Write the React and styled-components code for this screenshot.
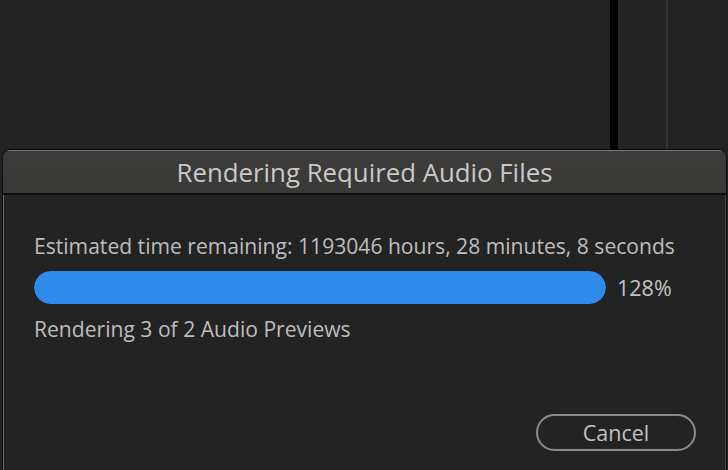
import React from "react";
import styled, { createGlobalStyle } from "styled-components";

const GlobalStyle = createGlobalStyle`
  html, body {
    margin: 0;
    padding: 0;
    background: #232323;
  }
  body {
    font-family: "Open Sans", "Noto Sans", sans-serif;
  }
`;

const Screen = styled.div`
  position: relative;
  width: 728px;
  height: 470px;
  overflow: hidden;
  background: #232323;
  display: flex;
  flex-direction: column;
`;

const Backdrop = styled.div`
  height: 149px;
  flex-shrink: 0;
  display: flex;
`;

const BackdropFill = styled.div`
  width: 610px;
  background: #232323;
`;

const Divider = styled.div`
  width: ${props => props.width}px;
  background: ${props => props.color};
`;

const Dialog = styled.div`
  margin: 0 1px 0 2px;
  flex: 1;
  display: flex;
  flex-direction: column;
  border: 1px solid #0c0c0c;
  border-bottom: none;
  border-radius: 9px 9px 0 0;
  box-shadow: inset 1px 1px 0 #6c6c6c, inset -1px 0 0 #4a4a4a;
  background: #232323;
  overflow: hidden;
`;

const TitleBar = styled.div`
  height: 42px;
  flex-shrink: 0;
  display: flex;
  align-items: center;
  justify-content: center;
  background: linear-gradient(#3d3c3b, #393938);
  border-top: 1px solid #777;
  border-bottom: 2px solid #0e0e0e;
  color: #c9c9c9;
  font-size: 25.8px;
`;

const Body = styled.div`
  flex: 1;
  display: flex;
  flex-direction: column;
  padding: 38px 0 0 31px;
  color: #bdbdbd;
  font-size: 21.1px;
`;

const Line = styled.div`
  line-height: 26px;
  white-space: nowrap;
`;

const ProgressRow = styled.div`
  display: flex;
  align-items: center;
  gap: 11px;
  margin: 12px 0 12px;
`;

const Track = styled.div`
  width: 572px;
  height: 33px;
  border-radius: 17px;
  background: #1b1b1b;
  overflow: hidden;
`;

const Fill = styled.div`
  height: 100%;
  background: #2d8aea;
  border-radius: 17px;
`;

const Percent = styled.span`
  font-size: 21.5px;
  color: #c3c3c3;
`;

const Footer = styled.div`
  margin-top: auto;
  display: flex;
  justify-content: flex-end;
  padding: 0 30px 19px 0;
`;

const Button = styled.button`
  width: 160px;
  height: 37px;
  border: 2px solid #8b8b8b;
  border-radius: 19px;
  background: transparent;
  color: #c2c2c2;
  font-family: inherit;
  font-size: 21.5px;
  line-height: 1;
  padding: 0;
`;

export default function App() {
  const percent = 128;
  return (
    <>
      <GlobalStyle />
      <Screen>
        <Backdrop>
          <BackdropFill />
          <Divider width={8} color="#000" />
          <Divider width={48} color="#232323" />
          <Divider width={2} color="#343434" />
        </Backdrop>
        <Dialog>
          <TitleBar>Rendering Required Audio Files</TitleBar>
          <Body>
            <Line>Estimated time remaining: 1193046 hours, 28 minutes, 8 seconds</Line>
            <ProgressRow>
              <Track>
                <Fill style={{ width: `${Math.min(percent, 100)}%` }} />
              </Track>
              <Percent>{percent}%</Percent>
            </ProgressRow>
            <Line>Rendering 3 of 2 Audio Previews</Line>
          </Body>
          <Footer>
            <Button>Cancel</Button>
          </Footer>
        </Dialog>
      </Screen>
    </>
  );
}
